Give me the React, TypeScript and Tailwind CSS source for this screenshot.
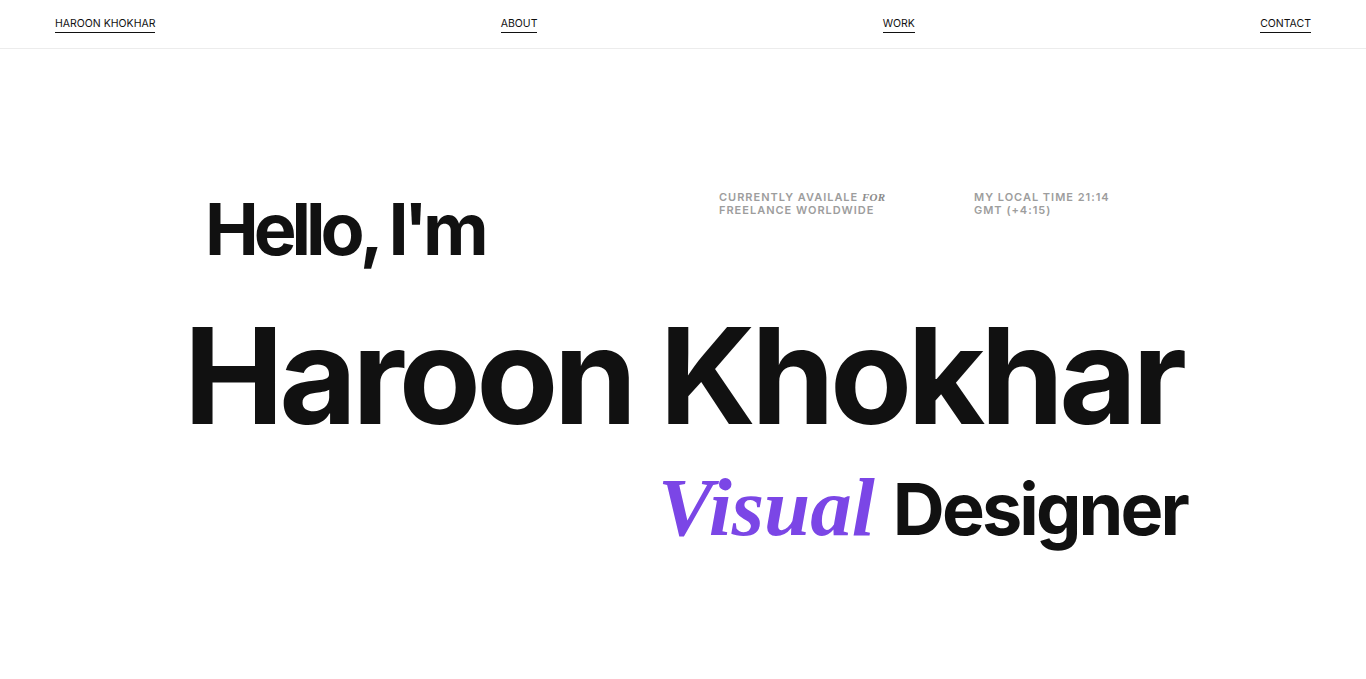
const sans = "font-['Inter','Liberation_Sans',sans-serif]";
const serif = "font-['Liberation_Serif','DejaVu_Serif',serif]";

function NavLink({ label }: { label: string }) {
	return (
		<a className="text-[10.5px] leading-none text-[#111] border-b border-[#111] pb-[3px]">
			{label}
		</a>
	);
}

function Header() {
	return (
		<header className="h-[49px] border-b border-[#ececec] px-[55px] flex justify-between items-center pt-[4px]">
			<NavLink label="HAROON KHOKHAR" />
			<NavLink label="ABOUT" />
			<NavLink label="WORK" />
			<NavLink label="CONTACT" />
		</header>
	);
}

function Info() {
	return (
		<div className="flex text-[11px] leading-[13px] font-semibold tracking-[0.09em] text-[#9d9d9d] pt-[142px]">
			<div className="w-[255px]">
				CURRENTLY AVAILALE{" "}
				<span className={`${serif} italic font-bold tracking-[0.02em] text-[#8a8a8a]`}>FOR</span>
				<br />
				FREELANCE WORLDWIDE
			</div>
			<div>
				MY LOCAL TIME 21:14
				<br />
				GMT (+4:15)
			</div>
		</div>
	);
}

export default function App() {
	return (
		<div className={`${sans} min-h-[679px] bg-white text-[#111]`}>
			<Header />
			<main>
				<div className="flex">
					<h2 className="pl-[205px] pt-[144px] w-[719px] text-[72px] leading-none font-bold tracking-[-0.07em]">
						Hello, I'm
					</h2>
					<Info />
				</div>
				<h1 className="mt-[43px] text-center text-[134px] leading-none font-bold tracking-[-0.035em]">
					Haroon Khokhar
				</h1>
				<div className="flex justify-end items-baseline pr-[179px] mt-[24px] gap-[18px]">
					<span className={`${serif} italic font-bold text-[83px] leading-none text-[#7b46e6]`}>Visual</span>
					<span className="text-[72px] leading-none font-bold tracking-[-0.04em]">Designer</span>
				</div>
			</main>
		</div>
	);
}
